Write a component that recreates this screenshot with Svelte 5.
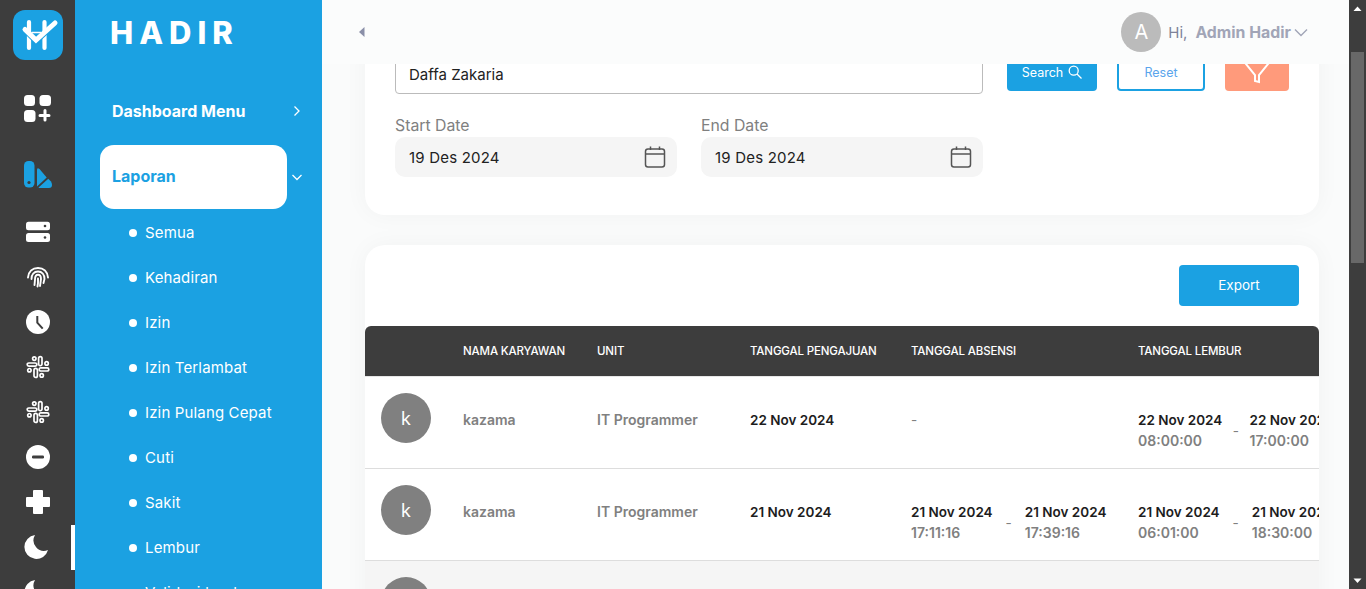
<script>
  const subItems = ["Semua", "Kehadiran", "Izin", "Izin Terlambat", "Izin Pulang Cepat", "Cuti", "Sakit", "Lembur", "Validasi tanda"];

  const rows = [
    {
      name: "kazama",
      unit: "IT Programmer",
      submitted: "22 Nov 2024",
      attendance: null,
      overtime: [["22 Nov 2024", "08:00:00"], ["22 Nov 2024", "17:00:00"]],
    },
    {
      name: "kazama",
      unit: "IT Programmer",
      submitted: "21 Nov 2024",
      attendance: [["21 Nov 2024", "17:11:16"], ["21 Nov 2024", "17:39:16"]],
      overtime: [["21 Nov 2024", "06:01:00"], ["21 Nov 2024", "18:30:00"]],
    },
    { name: "kazama", unit: "IT Programmer", submitted: "", attendance: null, overtime: null, empty: true },
  ];
</script>

{#snippet slack()}
  <svg width="24" height="24" viewBox="-12 -12 24 24" fill="none" stroke="#fff" stroke-width="1.7">
    <rect x="0.6" y="-10.4" width="3.4" height="9" rx="1.7" />
    <circle cx="-3.7" cy="-8.4" r="1.7" />
    <circle cx="8.6" cy="-3.6" r="1.7" />
    <rect x="1.2" y="0.8" width="9.6" height="3.2" rx="1.6" />
    <rect x="-4" y="1.4" width="3.4" height="9" rx="1.7" />
    <circle cx="3.7" cy="8.4" r="1.7" />
    <circle cx="-8.6" cy="3.2" r="1.7" />
    <rect x="-10.8" y="-4" width="9.6" height="3.2" rx="1.6" />
  </svg>
{/snippet}

{#snippet moon()}
  <svg class="moon" width="24" height="24" viewBox="0 0 24 24">
    <path fill="#fff" d="M11 0A12 12 0 1 0 24 15A10.500 10.500 0 0 1 11 0Z" />
  </svg>
{/snippet}

{#snippet range(pair, wide)}
  <div class="range" class:wide>
    <div class="stamp"><b>{pair[0][0]}</b><span>{pair[0][1]}</span></div>
    <i class="dash">-</i>
    <div class="stamp"><b>{pair[1][0]}</b><span>{pair[1][1]}</span></div>
  </div>
{/snippet}

<div class="page">
  <nav class="rail">
    <div class="logo">
      <svg width="50" height="50" viewBox="0 0 50 50" fill="none" stroke="#fff" stroke-linecap="round">
        <path stroke-width="4.200" d="M16 12V38M31.500 12V38" />
        <path stroke-width="1.500" d="M19 22.500H28" />
        <path stroke="#1ba1e2" stroke-width="3" d="M14 24 L23 33 L36 21" />
        <path stroke-width="5" d="M12 19.500 L23 30 L42 13" />
      </svg>
    </div>
    <div class="ico first">
      <svg width="28" height="28" viewBox="0 0 28 28" fill="#fff">
        <rect x="0" y="0" width="11" height="11" rx="3.500" />
        <rect x="15.500" y="0" width="11.500" height="11" rx="3.500" />
        <rect x="0" y="15" width="11.500" height="12" rx="3.500" />
        <path d="M20 15.500a1.500 1.500 0 0 1 3 0v3.500h2.500a1.500 1.500 0 0 1 0 3H23v3a1.500 1.500 0 0 1-3 0v-3h-3.500a1.500 1.500 0 0 1 0-3H20z" transform="translate(-0.500 0)" />
      </svg>
    </div>
    <div class="ico second">
      <svg width="28" height="28" viewBox="0 0 28 28">
        <rect x="0" y="1" width="10.500" height="26.500" rx="4.500" fill="#1ba1e2" />
        <circle cx="5" cy="22.500" r="1.600" fill="#3d3d3d" />
        <path fill="#1ba1e2" d="M13 10Q13 7 15.500 9L22.700 17.500L13 26.500Z" />
        <path fill="#1ba1e2" d="M14.500 27.500L24.300 18.700L27 21.500Q28 23 28 25Q28 28 25 28H15Z" />
      </svg>
    </div>
    <div class="ico third">
      <svg width="24" height="24" viewBox="0 0 24 24" fill="#fff">
        <rect y="1.700" width="24" height="8.500" rx="2.500" />
        <rect y="13" width="24" height="9" rx="2.500" />
        <circle cx="19" cy="6" r="1.300" fill="#3d3d3d" />
        <circle cx="19" cy="17.500" r="1.300" fill="#3d3d3d" />
      </svg>
    </div>
    <div class="ico">
      <svg width="24" height="24" viewBox="0 0 24 24" fill="none" stroke="#fff" stroke-width="1.900" stroke-linecap="round">
        <path d="M2 12.500C2.500 6.500 6.500 3 12 3s9.500 3.500 10 9.500" />
        <path d="M5.500 14C5.500 9.500 8 6.500 12 6.500s6.500 3 6.500 7.500l-1 4" />
        <path d="M8.500 20l.500-5.500C9 11.500 10 9.800 12 9.800s3 2 3 4.200l-1 7" />
        <path d="M12 13.500v4.500l-.5 3.500" />
      </svg>
    </div>
    <div class="ico">
      <svg width="24" height="24" viewBox="0 0 24 24">
        <circle cx="12" cy="12" r="12" fill="#fff" />
        <path d="M11.300 6V12.700L16.700 18.700" fill="none" stroke="#3d3d3d" stroke-width="2" />
      </svg>
    </div>
    <div class="ico">{@render slack()}</div>
    <div class="ico">{@render slack()}</div>
    <div class="ico">
      <svg width="24" height="24" viewBox="0 0 24 24">
        <circle cx="12" cy="12" r="12" fill="#fff" />
        <rect x="6" y="10.500" width="12" height="3" rx="1.200" fill="#3d3d3d" />
      </svg>
    </div>
    <div class="ico">
      <svg width="24" height="24" viewBox="0 0 24 24" fill="#fff">
        <rect x="7" y="0" width="10" height="24" rx="1" />
        <rect x="0" y="7" width="24" height="10" rx="1" />
      </svg>
    </div>
    <div class="ico active">{@render moon()}</div>
    <div class="ico">{@render moon()}</div>
  </nav>

  <aside class="side">
    <div class="brand">HADIR</div>
    <div class="menu-row dash-row">
      <span>Dashboard Menu</span>
      <svg width="10" height="12" viewBox="0 0 10 12" fill="none" stroke="#fff" stroke-width="1.300"><path d="M2.500 1.500 7 6l-4.500 4.500" /></svg>
    </div>
    <div class="menu-row open-row">
      <span class="pill">Laporan</span>
      <svg width="12" height="10" viewBox="0 0 12 10" fill="none" stroke="#fff" stroke-width="1.300"><path d="M1.500 3 6 7.500 10.500 3" /></svg>
    </div>
    <ul>
      {#each subItems as item}
        <li>{item}</li>
      {/each}
    </ul>
  </aside>

  <main>
    <header>
      <svg class="caret" width="6" height="10" viewBox="0 0 6 10"><path d="M5.500 0v10L0 5z" fill="#8a8fa8" /></svg>
      <div class="user">
        <div class="user-ava">A</div>
        <span class="hi">Hi,</span>
        <span class="uname">Admin Hadir</span>
        <svg width="14" height="9" viewBox="0 0 14 9" fill="none" stroke="#a1a5b7" stroke-width="1.400"><path d="M1 1.500l6 6 6-6" /></svg>
      </div>
    </header>

    <div class="content">
      <section class="card filter">
        <div class="filter-top">
          <input class="search" value="Daffa Zakaria" />
          <button class="btn search-btn">
            Search
            <svg width="14" height="14" viewBox="0 0 14 14" fill="none" stroke="#fff" stroke-width="1.300"><circle cx="5.700" cy="5.700" r="4.500" /><path d="M9 9l4.500 4.500" /></svg>
          </button>
          <button class="btn reset-btn">Reset</button>
          <button class="btn funnel-btn">
            <svg width="24" height="34" viewBox="0 0 24 34" fill="none" stroke="#fff" stroke-width="2"><path d="M-8 5 10 27V33L14 34V27L32 5" /></svg>
          </button>
        </div>
        <div class="dates">
          {#each ["Start Date", "End Date"] as label}
            <div class="date-field">
              <span class="date-label">{label}</span>
              <div class="date-box">
                <span>19 Des 2024</span>
                <svg width="22" height="22" viewBox="0 0 22 22" fill="none" stroke="#555" stroke-width="1.500">
                  <rect x="1.500" y="3" width="19" height="18" rx="2.500" />
                  <path d="M1.500 8h19M6.500 0.500V4M15.500 0.500V4" />
                </svg>
              </div>
            </div>
          {/each}
        </div>
      </section>

      <section class="card list">
        <div class="toolbar"><button class="btn export">Export</button></div>
        <div class="table">
          <div class="row head">
            <div></div>
            <div>NAMA KARYAWAN</div>
            <div>UNIT</div>
            <div>TANGGAL PENGAJUAN</div>
            <div>TANGGAL ABSENSI</div>
            <div>TANGGAL LEMBUR</div>
          </div>
          {#each rows as row, i}
            <div class="row body" class:alt={i === 2}>
              <div class="ava-cell"><div class="ava">k</div></div>
              {#if !row.empty}
                <div class="name">{row.name}</div>
                <div class="name">{row.unit}</div>
                <div class="strong">{row.submitted}</div>
                <div>
                  {#if row.attendance}
                    {@render range(row.attendance, i === 1)}
                  {:else}
                    <span class="none">-</span>
                  {/if}
                </div>
                <div>{@render range(row.overtime, i === 1)}</div>
              {/if}
            </div>
          {/each}
        </div>
      </section>
    </div>
  </main>

  <div class="scrollbar">
    <svg width="17" height="17" viewBox="0 0 17 17"><path d="M4.500 11 8.500 6.500 12.500 11z" fill="#fff" /></svg>
    <div class="track"><div class="thumb"></div></div>
    <svg width="17" height="17" viewBox="0 0 17 17"><path d="M4.500 6.500 8.500 11 12.500 6.500z" fill="#fff" /></svg>
  </div>
</div>

<style>
  :global(body) {
    margin: 0;
    overflow: hidden;
  }

  .page {
    display: flex;
    height: 589px;
    overflow: hidden;
    font-family: Inter, "Liberation Sans", sans-serif;
    background: #fafbfb;
  }

  .rail {
    width: 75px;
    flex-shrink: 0;
    background: #3d3d3d;
    display: flex;
    flex-direction: column;
    align-items: center;
    padding-top: 10px;
    box-sizing: border-box;
  }

  .logo {
    width: 50px;
    height: 50px;
    border-radius: 12px;
    background: #1ba1e2;
    flex-shrink: 0;
  }

  .logo svg,
  .ico svg {
    display: block;
  }

  .ico svg.moon {
    margin-right: 4px;
  }

  .ico {
    position: relative;
    align-self: stretch;
    height: 45px;
    flex-shrink: 0;
    display: flex;
    align-items: center;
    justify-content: center;
  }

  .first {
    margin-top: 26px;
  }

  .second {
    margin-top: 20px;
  }

  .third {
    margin-top: 13px;
  }

  .active::after {
    content: "";
    position: absolute;
    right: 0;
    top: 1px;
    width: 4px;
    height: 45px;
    background: #fff;
  }

  .side {
    width: 247px;
    flex-shrink: 0;
    background: #1ba1e2;
    color: #fff;
    box-sizing: border-box;
    padding-left: 25px;
  }

  .brand {
    height: 66px;
    padding: 0 0 0 10px;
    font-size: 31px;
    line-height: 66px;
    font-weight: 800;
    letter-spacing: 6px;
  }

  .menu-row {
    display: flex;
    align-items: center;
    font-weight: 700;
  }

  .dash-row {
    height: 57px;
    margin-top: 16px;
    padding-left: 12px;
    justify-content: space-between;
    padding-right: 20px;
    font-size: 16px;
  }

  .open-row {
    margin-top: 6px;
    justify-content: space-between;
    padding-right: 19px;
    font-size: 16px;
  }

  .pill {
    width: 187px;
    height: 64px;
    box-sizing: border-box;
    padding: 0 0 2px 12px;
    background: #fff;
    color: #1ba1e2;
    border-radius: 14px;
    display: flex;
    align-items: center;
  }

  ul {
    list-style: none;
    margin: 1px 0 0;
    padding: 0 0 0 29px;
  }

  li {
    height: 45px;
    display: flex;
    align-items: center;
    gap: 8px;
    font-size: 15px;
    letter-spacing: 0.15px;
  }

  li::before {
    content: "";
    width: 8px;
    height: 8px;
    border-radius: 50%;
    background: #fff;
  }

  main {
    flex: 1;
    min-width: 0;
    display: flex;
    flex-direction: column;
  }

  header {
    height: 64px;
    flex-shrink: 0;
    background: #fbfcfc;
    display: flex;
    align-items: center;
    justify-content: space-between;
    padding: 0 41px 0 37px;
    position: relative;
    z-index: 1;
  }

  .user {
    display: flex;
    align-items: center;
  }

  .user-ava {
    width: 40px;
    height: 40px;
    border-radius: 50%;
    background: #bbb;
    color: #fff;
    font-size: 20px;
    display: flex;
    align-items: center;
    justify-content: center;
    margin-right: 7px;
  }

  .hi {
    font-size: 15px;
    color: #7e8299;
    margin-right: 8px;
  }

  .uname {
    font-size: 15.850px;
    font-weight: 700;
    color: #a1a5b7;
    margin-right: 3px;
  }

  .content {
    flex: 1;
    min-height: 0;
    overflow: hidden;
    padding: 0 30px 0 43px;
  }

  .card {
    background: #fff;
    border-radius: 20px;
    box-shadow: 0 0 24px rgba(0, 0, 0, 0.04);
  }

  .filter {
    margin-top: -17px;
    padding: 0 30px 38px;
    border-radius: 0 0 20px 20px;
    margin-bottom: 30px;
  }

  .filter-top {
    display: flex;
    align-items: flex-end;
    gap: 20px;
    height: 44px;
  }

  .search {
    width: 588px;
    height: 40px;
    box-sizing: border-box;
    margin-right: 4px;
    margin-bottom: -3px;
    padding: 0 13px;
    border: 1px solid #bbb;
    border-radius: 4px;
    font: inherit;
    font-size: 15px;
    color: #222;
    outline: none;
  }

  .btn {
    font-family: inherit;
    border: 0;
    border-radius: 4px;
    cursor: pointer;
    display: flex;
    align-items: center;
    justify-content: center;
  }

  .search-btn {
    width: 90px;
    height: 38px;
    gap: 5px;
    background: #1ba1e2;
    color: #fff;
    font-size: 12.500px;
  }

  .reset-btn {
    width: 88px;
    height: 38px;
    background: #fff;
    border: 2px solid #1ba1e2;
    color: #5aa5ec;
    font-size: 12.500px;
  }

  .funnel-btn {
    width: 64px;
    height: 38px;
    background: #ff9a7b;
    overflow: hidden;
    align-items: flex-end;
    padding: 0 0 9px;
  }

  .funnel-btn svg {
    display: block;
    overflow: visible;
    flex-shrink: 0;
  }

  .dates {
    display: flex;
    gap: 24px;
    margin-top: 24px;
  }

  .date-field {
    width: 282px;
  }

  .date-label {
    display: block;
    font-size: 15.800px;
    line-height: 22px;
    color: #808080;
  }

  .date-box {
    height: 40px;
    background: #f5f5f5;
    border-radius: 10px;
    display: flex;
    align-items: center;
    justify-content: space-between;
    padding: 0 11px 0 14px;
    font-size: 15px;
    letter-spacing: 0.2px;
    color: #222;
  }

  .toolbar {
    height: 81px;
    display: flex;
    justify-content: flex-end;
    padding: 20px 20px 0;
    box-sizing: border-box;
  }

  .export {
    width: 120px;
    height: 41px;
    padding: 0 0 1px;
    background: #1ba1e2;
    color: #fff;
    font-size: 13.500px;
  }

  .table {
    overflow: hidden;
    border-radius: 6px 6px 0 0;
  }

  .row {
    display: grid;
    grid-template-columns: 98px 134px 153px 161px 227px 1fr;
    align-items: center;
    font-size: 13.500px;
  }

  .head {
    height: 51px;
    box-sizing: border-box;
    padding-bottom: 1px;
    background: #3d3d3d;
    border-bottom: 1px solid #e6e6e6;
    color: #fff;
    font-size: 11.500px;
    font-weight: 500;
    letter-spacing: -0.15px;
  }

  .body {
    height: 92px;
    box-sizing: border-box;
    border-bottom: 1px solid #ddd;
    align-items: start;
    white-space: nowrap;
  }

  .body > div:not(.ava-cell) {
    padding-top: 35px;
    min-width: 0;
  }

  .body > div.name {
    padding-top: 34px;
  }

  .alt {
    background: #f5f5f5;
  }

  .ava-cell {
    padding: 16px 0 0 16px;
  }

  .ava {
    width: 50px;
    height: 50px;
    border-radius: 50%;
    background: #808080;
    color: #fff;
    font-size: 18px;
    display: flex;
    align-items: center;
    justify-content: center;
  }

  .name {
    color: #808080;
    font-weight: 600;
    font-size: 14px;
  }

  .strong,
  .stamp b {
    color: #1d1d1d;
    font-weight: 600;
  }

  .none {
    color: #808080;
  }

  .range {
    display: flex;
    align-items: flex-start;
    gap: 10.500px;
  }

  .range.wide {
    gap: 13px;
  }

  .stamp {
    display: flex;
    flex-direction: column;
  }

  .stamp b {
    line-height: 16px;
  }

  .stamp span {
    color: #808080;
    font-weight: 600;
    font-size: 14px;
    line-height: 26px;
  }

  .dash {
    font-style: normal;
    color: #808080;
    padding-top: 11px;
  }

  .scrollbar {
    width: 17px;
    flex-shrink: 0;
    background: #3d3d3d;
    display: flex;
    flex-direction: column;
    justify-content: space-between;
  }

  .scrollbar svg {
    display: block;
    flex-shrink: 0;
  }

  .track {
    flex: 1;
    padding-top: 35px;
  }

  .thumb {
    width: 13px;
    margin-left: 2px;
    height: 211px;
    background: #686868;
  }
</style>
